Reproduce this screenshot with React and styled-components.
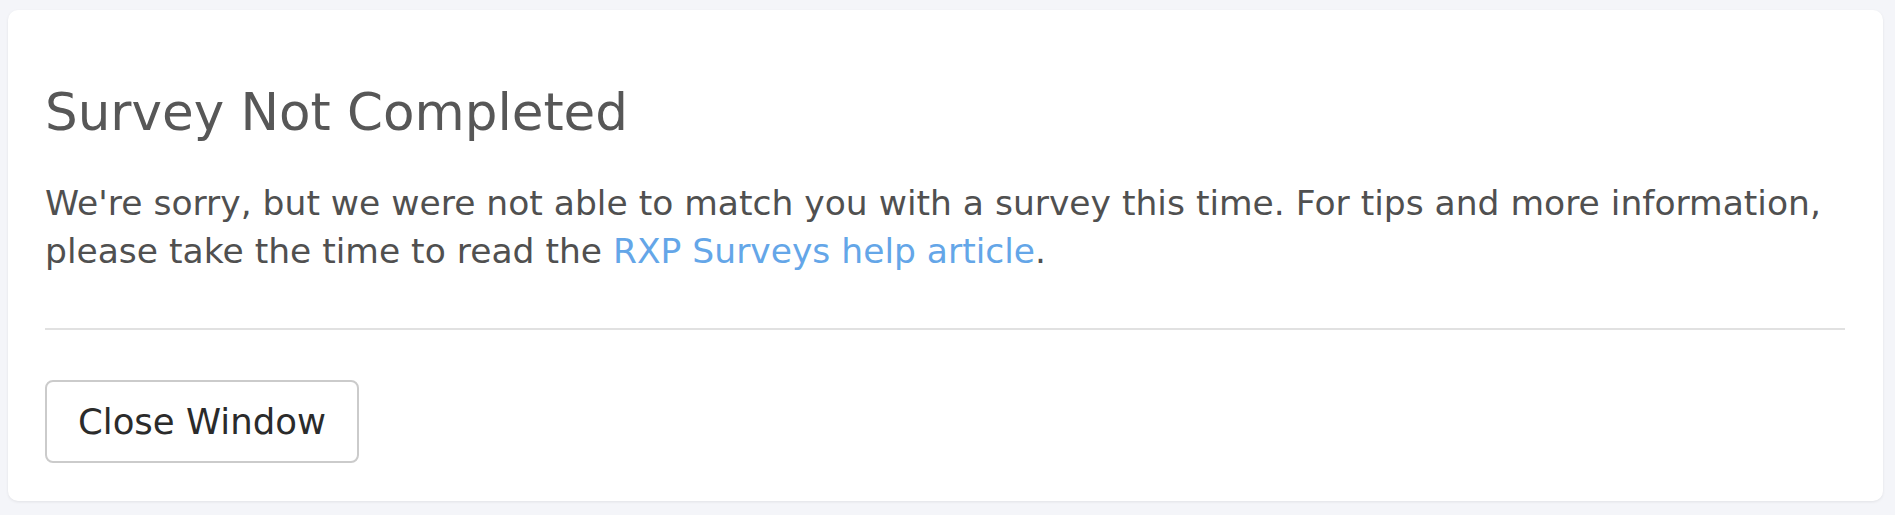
import React from "react";
import styled, { createGlobalStyle } from "styled-components";

const GlobalStyle = createGlobalStyle`
  html, body {
    margin: 0;
    background: #f4f5f9;
  }
  body {
    font-family: "DejaVu Sans", "Liberation Sans", sans-serif;
  }
`;

const Page = styled.div`
  padding: 10px 12px 14px 8px;
`;

const Card = styled.div`
  background: #ffffff;
  border-radius: 10px;
  box-shadow: 0 1px 3px rgba(0, 0, 0, 0.08);
  padding: 72px 38px 38px 37px;
`;

const Title = styled.h1`
  margin: 0;
  font-size: 51.5px;
  line-height: 61px;
  font-weight: 400;
  color: #575757;
`;

const Message = styled.p`
  margin: 36px 0 0;
  font-size: 34.5px;
  line-height: 48px;
  color: #505050;
`;

const HelpLink = styled.a`
  color: #64a6e8;
  text-decoration: none;
`;

const Divider = styled.hr`
  margin: 53px 0 50px;
  border: 0;
  height: 2px;
  background: #e1e1e1;
`;

const Button = styled.button`
  height: 83px;
  padding: 0 31px;
  background: #ffffff;
  border: 2px solid #cbcbcb;
  border-radius: 8px;
  font-family: inherit;
  font-size: 35.5px;
  color: #2b2b2b;
  cursor: pointer;
`;

export default function App() {
  return (
    <Page>
      <GlobalStyle />
      <Card>
        <Title>Survey Not Completed</Title>
        <Message>
          We're sorry, but we were not able to match you with a survey this
          time. For tips and more information, please take the time to read
          the <HelpLink href="#">RXP Surveys help article</HelpLink>.
        </Message>
        <Divider />
        <Button>Close Window</Button>
      </Card>
    </Page>
  );
}
